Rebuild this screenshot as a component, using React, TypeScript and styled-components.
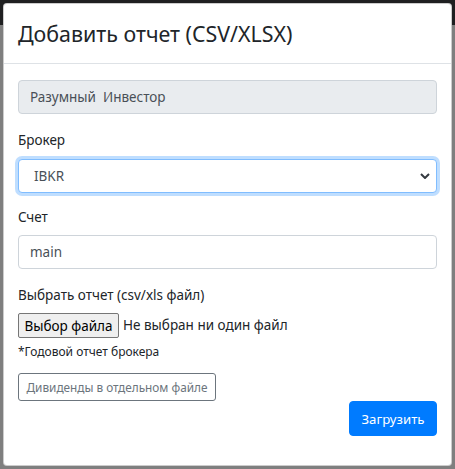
import React from 'react';
import styled, { createGlobalStyle } from 'styled-components';

const GlobalStyle = createGlobalStyle`
  html, body {
    margin: 0;
    padding: 0;
  }
  body {
    font-family: "Noto Sans", "Open Sans", sans-serif;
    color: #212529;
  }
`;

const App = () => {
  return (
    <Backdrop>
      <GlobalStyle />
      <Modal>
        <ModalHeader>
          <ModalTitle>Добавить отчет (CSV/XLSX)</ModalTitle>
        </ModalHeader>
        <ModalBody>
          <FormGroup>
            <ReadonlyInput>Разумный  Инвестор</ReadonlyInput>
          </FormGroup>

          <FormGroup $gap={14}>
            <Label>Брокер</Label>
            <SelectBox>
              <span>IBKR</span>
              <svg width="10" height="6" viewBox="0 0 10 6">
                <polyline points="1,1 5,5 9,1" fill="none" stroke="#343a40" strokeWidth="2" />
              </svg>
            </SelectBox>
          </FormGroup>

          <FormGroup>
            <Label $gap={7}>Счет</Label>
            <TextInput>main</TextInput>
          </FormGroup>

          <Label $gap={7}>Выбрать отчет (csv/xls файл)</Label>
          <FileRow>
            <FileButton type="button">Выбор файла</FileButton>
            <FileName>Не выбран ни один файл</FileName>
          </FileRow>
          <Hint>*Годовой отчет брокера</Hint>

          <OutlineButton type="button">Дивиденды в отдельном файле</OutlineButton>
          <Actions>
            <PrimaryButton type="button">Загрузить</PrimaryButton>
          </Actions>
        </ModalBody>
      </Modal>
    </Backdrop>
  );
};

export default App;

const Backdrop = styled.div`
  min-height: 469px;
  box-sizing: border-box;
  padding: 3px;
  background: linear-gradient(to bottom, #1f2021 0, #1f2021 25px, #7f7f7f 25px);
`;

const Modal = styled.div`
  box-sizing: border-box;
  height: 463px;
  background: #fff;
  border: 1px solid rgba(0, 0, 0, 0.2);
  border-radius: 4px;
  display: flex;
  flex-direction: column;
`;

const ModalHeader = styled.div`
  padding: 14px;
  border-bottom: 1px solid #dee2e6;
`;

const ModalTitle = styled.h5`
  margin: 0;
  font-size: 21.4px;
  line-height: 31px;
  font-weight: 400;
  color: #212529;
`;

const ModalBody = styled.div`
  padding: 16px 14px 14px;
  display: flex;
  flex-direction: column;
  font-size: 13.5px;
  line-height: 21px;
`;

const FormGroup = styled.div<{ $gap?: number }>`
  margin-bottom: ${p => p.$gap ?? 16}px;
`;

const Label = styled.div<{ $gap?: number }>`
  margin-bottom: ${p => p.$gap ?? 8}px;
  color: #212529;
`;

const fieldBase = `
  box-sizing: border-box;
  height: 34px;
  border: 1px solid #ced4da;
  border-radius: 4px;
  padding: 0 11px;
  display: flex;
  align-items: center;
  color: #495057;
`;

const ReadonlyInput = styled.div`
  ${fieldBase}
  background: #e9ecef;
  white-space: pre;
`;

const TextInput = styled.div`
  ${fieldBase}
  background: #fff;
`;

const SelectBox = styled.div`
  ${fieldBase}
  background: #fff;
  border-color: #80bdff;
  box-shadow: 0 0 0 3px rgba(0, 123, 255, 0.25);
  justify-content: space-between;
  padding: 0 6px 0 15px;
`;

const FileRow = styled.div`
  display: flex;
  align-items: center;
  gap: 4px;
`;

const FileButton = styled.button`
  box-sizing: border-box;
  height: 25px;
  width: 101px;
  padding: 0;
  font-family: inherit;
  font-size: 13.5px;
  color: #000;
  background: #efefef;
  border: 1px solid #767676;
  border-radius: 2px;
`;

const FileName = styled.span`
  color: #212529;
`;

const Hint = styled.div`
  margin-top: 3px;
  font-size: 12px;
  line-height: 21px;
  color: #212529;
`;

const OutlineButton = styled.button`
  align-self: flex-start;
  box-sizing: border-box;
  margin-top: 11px;
  height: 28px;
  width: 198px;
  padding: 0 7px;
  font-family: inherit;
  font-size: 11.8px;
  color: #6c757d;
  background: #fff;
  border: 1px solid #6c757d;
  border-radius: 3px;
`;

const Actions = styled.div`
  display: flex;
  justify-content: flex-end;
`;

const PrimaryButton = styled.button`
  box-sizing: border-box;
  height: 35px;
  width: 88px;
  padding: 0;
  font-family: inherit;
  font-size: 13.2px;
  color: #fff;
  background: #007bff;
  border: 1px solid #007bff;
  border-radius: 4px;
`;
